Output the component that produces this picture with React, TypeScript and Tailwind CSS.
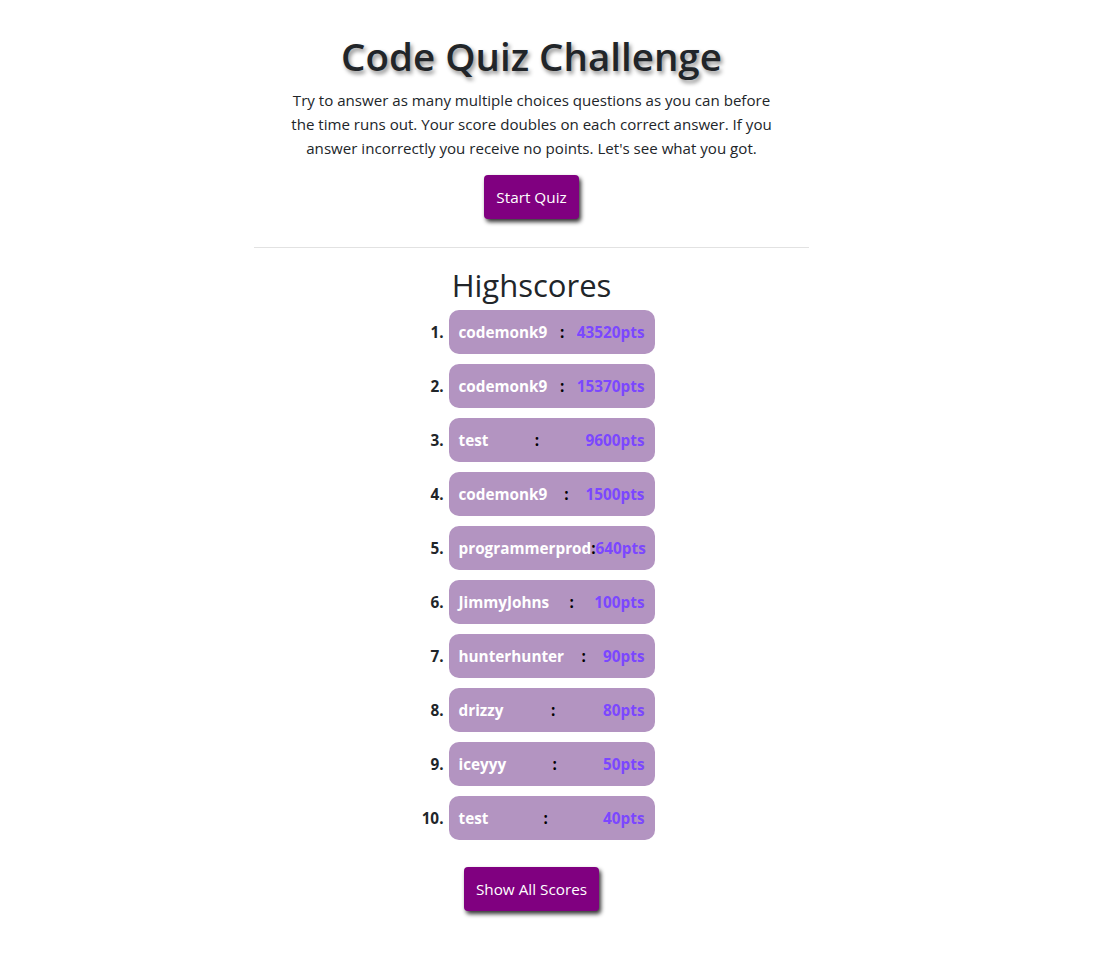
import React from "react";

const scores = [
  ["codemonk9", "43520pts"],
  ["codemonk9", "15370pts"],
  ["test", "9600pts"],
  ["codemonk9", "1500pts"],
  ["programmerprod", "640pts"],
  ["JimmyJohns", "100pts"],
  ["hunterhunter", "90pts"],
  ["drizzy", "80pts"],
  ["iceyyy", "50pts"],
  ["test", "40pts"],
];

export default function App() {
  return (
    <div className="min-h-[956px] bg-white text-[#212529] font-['Open_Sans',sans-serif]">
      <div className="w-[1063px] flex flex-col items-center pt-[32px]">
        <h1 className="text-[38.5px] leading-[48px] font-semibold mb-[8px] [text-shadow:2px_3px_4px_rgba(0,0,0,0.45)]">
          Code Quiz Challenge
        </h1>
        <p className="text-[15.1px] leading-[24px] text-center mb-[15px]">
          <span className="block">Try to answer as many multiple choices questions as you can before</span>
          <span className="block">the time runs out. Your score doubles on each correct answer. If you</span>
          <span className="block">answer incorrectly you receive no points. Let's see what you got.</span>
        </p>
        <button className="bg-[#800080] text-white text-[15.3px] leading-[24px] px-[12px] py-[10px] rounded-[4px] shadow-[2px_3px_4px_rgba(0,0,0,0.8)]">
          Start Quiz
        </button>
        <hr className="w-[555px] border-0 border-t border-[#e2e2e2] mt-[28px] mb-[18px]" />
        <h2 className="text-[31px] leading-[38px] font-medium mb-[6px]">Highscores</h2>
        <ol className="flex flex-col gap-[10px] w-[246px]">
          {scores.map(([name, pts], i) => (
            <li key={i} className="flex items-center">
              <span className="w-[40px] pr-[5px] text-right font-bold text-[15.3px] text-[#212529]">
                {i + 1}.
              </span>
              <div className="w-[206px] h-[44px] rounded-[10px] bg-[#b394c1] px-[10px] flex items-center justify-between font-bold text-[15.3px]">
                <span className="text-white">{name}</span>
                <span className="text-black">:</span>
                <span className="text-[#7b47ff]">{pts}</span>
              </div>
            </li>
          ))}
        </ol>
        <button className="mt-[27px] bg-[#800080] text-white text-[15.3px] leading-[24px] px-[12px] py-[10px] rounded-[4px] shadow-[2px_3px_4px_rgba(0,0,0,0.8)]">
          Show All Scores
        </button>
      </div>
    </div>
  );
}
